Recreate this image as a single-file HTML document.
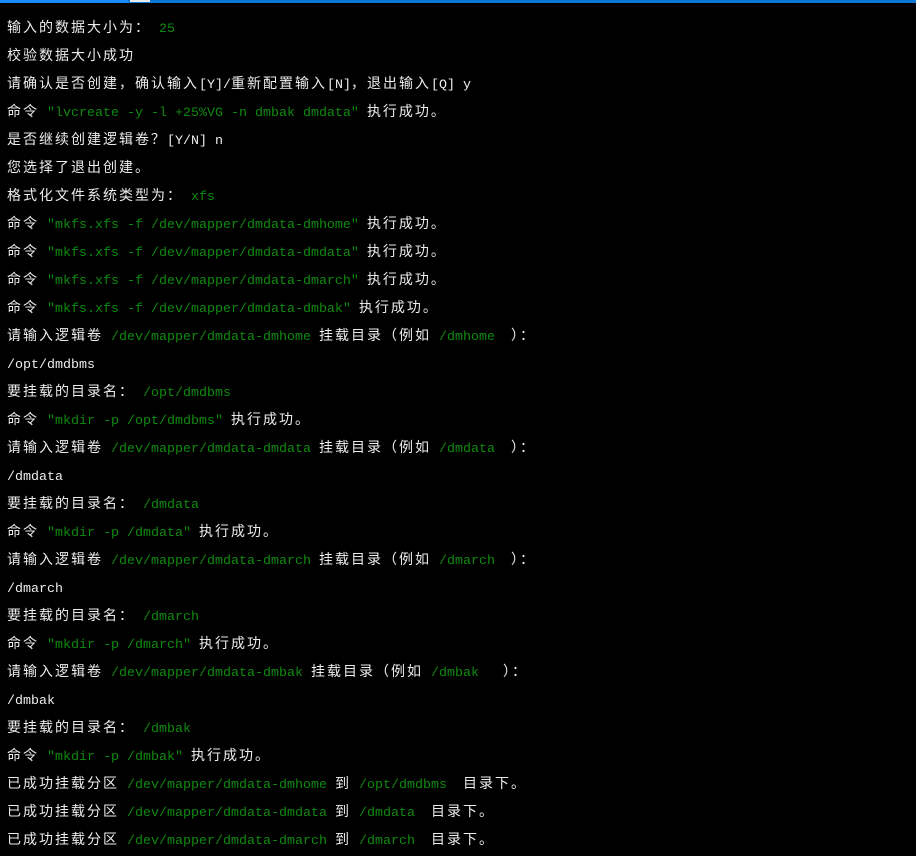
<!DOCTYPE html>
<html><head><meta charset="utf-8"><style>
html,body{margin:0;padding:0;background:#000;width:916px;height:856px;overflow:hidden}
.top{position:absolute;left:0;top:0;width:916px;height:3px;background:#0a78d4}
.top .a{position:absolute;left:0;top:0;width:128px;height:3px;background:#1a8cff}
.top .b{position:absolute;left:130px;top:0;width:20px;height:2px;background:#e8e8e8}
.w{position:absolute;left:0;top:2px;width:916px;height:854px}
.l{position:absolute;left:7px;height:28px;line-height:28px;white-space:pre;font-family:"Liberation Mono","Noto Sans CJK SC",monospace;font-size:13.33px;color:#ececec}
.g{color:#0f8a0f}
.c{letter-spacing:2px;font-size:14px;line-height:0;font-family:"Noto Sans CJK SC",sans-serif}
</style></head><body>
<div class="top"><div class="a"></div><div class="b"></div></div>
<div class="w">
<div class="l" style="top:14px"><span class="c">输入的数据大小为：</span> <span class="g">25</span></div>
<div class="l" style="top:42px"><span class="c">校验数据大小成功</span></div>
<div class="l" style="top:70px"><span class="c">请确认是否创建，确认输入</span>[Y]/<span class="c">重新配置输入</span>[N]<span class="c">，退出输入</span>[Q] y</div>
<div class="l" style="top:98px"><span class="c">命令</span> <span class="g">"lvcreate -y -l +25%VG -n dmbak dmdata"</span> <span class="c">执行成功。</span></div>
<div class="l" style="top:126px"><span class="c">是否继续创建逻辑卷？</span>[Y/N] n</div>
<div class="l" style="top:154px"><span class="c">您选择了退出创建。</span></div>
<div class="l" style="top:182px"><span class="c">格式化文件系统类型为：</span> <span class="g">xfs</span></div>
<div class="l" style="top:210px"><span class="c">命令</span> <span class="g">"mkfs.xfs -f /dev/mapper/dmdata-dmhome"</span> <span class="c">执行成功。</span></div>
<div class="l" style="top:238px"><span class="c">命令</span> <span class="g">"mkfs.xfs -f /dev/mapper/dmdata-dmdata"</span> <span class="c">执行成功。</span></div>
<div class="l" style="top:266px"><span class="c">命令</span> <span class="g">"mkfs.xfs -f /dev/mapper/dmdata-dmarch"</span> <span class="c">执行成功。</span></div>
<div class="l" style="top:294px"><span class="c">命令</span> <span class="g">"mkfs.xfs -f /dev/mapper/dmdata-dmbak"</span> <span class="c">执行成功。</span></div>
<div class="l" style="top:322px"><span class="c">请输入逻辑卷</span> <span class="g">/dev/mapper/dmdata-dmhome</span> <span class="c">挂载目录（例如</span> <span class="g">/dmhome</span>  <span class="c">）：</span></div>
<div class="l" style="top:350px">/opt/dmdbms</div>
<div class="l" style="top:378px"><span class="c">要挂载的目录名：</span> <span class="g">/opt/dmdbms</span></div>
<div class="l" style="top:406px"><span class="c">命令</span> <span class="g">"mkdir -p /opt/dmdbms"</span> <span class="c">执行成功。</span></div>
<div class="l" style="top:434px"><span class="c">请输入逻辑卷</span> <span class="g">/dev/mapper/dmdata-dmdata</span> <span class="c">挂载目录（例如</span> <span class="g">/dmdata</span>  <span class="c">）：</span></div>
<div class="l" style="top:462px">/dmdata</div>
<div class="l" style="top:490px"><span class="c">要挂载的目录名：</span> <span class="g">/dmdata</span></div>
<div class="l" style="top:518px"><span class="c">命令</span> <span class="g">"mkdir -p /dmdata"</span> <span class="c">执行成功。</span></div>
<div class="l" style="top:546px"><span class="c">请输入逻辑卷</span> <span class="g">/dev/mapper/dmdata-dmarch</span> <span class="c">挂载目录（例如</span> <span class="g">/dmarch</span>  <span class="c">）：</span></div>
<div class="l" style="top:574px">/dmarch</div>
<div class="l" style="top:602px"><span class="c">要挂载的目录名：</span> <span class="g">/dmarch</span></div>
<div class="l" style="top:630px"><span class="c">命令</span> <span class="g">"mkdir -p /dmarch"</span> <span class="c">执行成功。</span></div>
<div class="l" style="top:658px"><span class="c">请输入逻辑卷</span> <span class="g">/dev/mapper/dmdata-dmbak</span> <span class="c">挂载目录（例如</span> <span class="g">/dmbak</span>   <span class="c">）：</span></div>
<div class="l" style="top:686px">/dmbak</div>
<div class="l" style="top:714px"><span class="c">要挂载的目录名：</span> <span class="g">/dmbak</span></div>
<div class="l" style="top:742px"><span class="c">命令</span> <span class="g">"mkdir -p /dmbak"</span> <span class="c">执行成功。</span></div>
<div class="l" style="top:770px"><span class="c">已成功挂载分区</span> <span class="g">/dev/mapper/dmdata-dmhome</span> <span class="c">到</span> <span class="g">/opt/dmdbms</span>  <span class="c">目录下。</span></div>
<div class="l" style="top:798px"><span class="c">已成功挂载分区</span> <span class="g">/dev/mapper/dmdata-dmdata</span> <span class="c">到</span> <span class="g">/dmdata</span>  <span class="c">目录下。</span></div>
<div class="l" style="top:826px"><span class="c">已成功挂载分区</span> <span class="g">/dev/mapper/dmdata-dmarch</span> <span class="c">到</span> <span class="g">/dmarch</span>  <span class="c">目录下。</span></div>
</div>
</body></html>
